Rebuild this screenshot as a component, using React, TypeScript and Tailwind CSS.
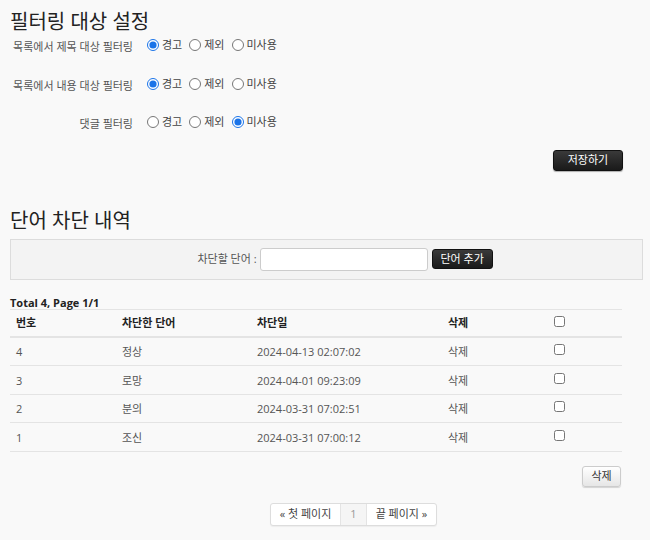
export default function App() {
  const rows = [
    { no: 4, word: "정상", date: "2024-04-13 02:07:02" },
    { no: 3, word: "로망", date: "2024-04-01 09:23:09" },
    { no: 2, word: "분의", date: "2024-03-31 07:02:51" },
    { no: 1, word: "조신", date: "2024-03-31 07:00:12" },
  ]

  const settings = [
    { label: "목록에서 제목 대상 필터링", value: "warn" },
    { label: "목록에서 내용 대상 필터링", value: "warn" },
    { label: "댓글 필터링", value: "off" },
  ]

  const font = { fontFamily: '"Open Sans", "Noto Sans CJK KR", sans-serif' }

  return (
    <div className="min-h-[540px] w-[650px] bg-[#f9f9f9] text-[#333]" style={font}>
      <div className="px-[10px] pt-[9px]">
        <h2 className="text-[20px] leading-[26px] text-[#222]">필터링 대상 설정</h2>

        <div className="mt-[3px] flex flex-col">
          {settings.map((s, i) => (
            <div key={i} className="flex h-[38.5px] items-start">
              <div className="w-[123px] whitespace-nowrap pt-[2px] text-right text-[11px] leading-[14px] text-[#555]">{s.label}</div>
              <div className="ml-[14px] flex items-center gap-[4px] text-[11px] leading-[14px] text-[#444]">
                {[
                  ["warn", "경고"],
                  ["exclude", "제외"],
                  ["off", "미사용"],
                ].map(([v, t]) => (
                  <label key={v} className="mr-[3px] flex items-center gap-[3px]">
                    <input
                      type="radio"
                      name={"f" + i}
                      defaultChecked={s.value === v}
                      className="m-0 h-[12px] w-[12px] accent-[#1a73e8]"
                    />
                    <span>{t}</span>
                  </label>
                ))}
              </div>
            </div>
          ))}
        </div>

        <div className="mt-[-4px] flex justify-end pr-[17px]">
          <button className="h-[21px] w-[70px] rounded-[3px] border border-[#111] bg-gradient-to-b from-[#3a3a3a] to-[#1a1a1a] text-[11px] text-white shadow-[0_1px_1px_rgba(0,0,0,0.3)]">
            저장하기
          </button>
        </div>

        <h2 className="mt-[37px] text-[20px] leading-[26px] text-[#222]">단어 차단 내역</h2>

        <div className="mr-[-3px] mt-[5px] flex h-[41px] items-center justify-center border border-[#dcdcdc] bg-[#f3f3f3] pl-[37px]">
          <span className="mr-[3px] text-[11px] text-[#555]">차단할 단어 :</span>
          <input className="h-[23px] w-[168px] rounded-[3px] border border-[#ccc] bg-white" />
          <button className="ml-[4px] h-[20px] w-[61px] rounded-[3px] border border-[#111] bg-gradient-to-b from-[#3a3a3a] to-[#1a1a1a] text-[11px] text-white">
            단어 추가
          </button>
        </div>

        <div className="mt-[16px] w-[612px]">
          <div className="text-[11px] font-bold leading-[14px] text-[#222]">Total 4, Page 1/1</div>
          <table className="mt-[-1px] w-full border-collapse text-[11px]">
            <thead>
              <tr className="h-[28px] border-t border-b-2 border-[#e4e4e4] text-left font-bold text-[#222]">
                <th className="w-[112px] pl-[6px]">번호</th>
                <th className="w-[135px]">차단한 단어</th>
                <th className="w-[191px]">차단일</th>
                <th className="w-[106px]">삭제</th>
                <th className="text-left">
                  <input type="checkbox" className="m-0 h-[11px] w-[11px]" />
                </th>
              </tr>
            </thead>
            <tbody>
              {rows.map((r) => (
                <tr key={r.no} className="h-[28.5px] border-b border-[#e4e4e4] text-[#555]">
                  <td className="pl-[6px] pt-[2px]">{r.no}</td>
                  <td className="pt-[2px]">{r.word}</td>
                  <td className="pt-[2px]">{r.date}</td>
                  <td className="pt-[2px] font-normal">삭제</td>
                  <td>
                    <input type="checkbox" className="m-0 h-[11px] w-[11px]" />
                  </td>
                </tr>
              ))}
            </tbody>
          </table>

          <div className="mt-[14px] flex justify-end pr-[1px]">
            <button className="h-[21px] w-[39px] rounded-[3px] border border-[#ccc] bg-gradient-to-b from-white to-[#e6e6e6] text-[11px] text-[#333] shadow-[0_1px_1px_rgba(0,0,0,0.15)]">
              삭제
            </button>
          </div>
        </div>

        <div className="mt-[16px] flex justify-center pl-[57px]">
          <div className="flex h-[23px] overflow-hidden rounded-[3px] border border-[#ddd] bg-white text-[11px] text-[#444] shadow-[0_1px_1px_rgba(0,0,0,0.05)]">
            <span className="flex items-center px-[9px]">« 첫 페이지</span>
            <span className="flex items-center border-x border-[#e4e4e4] bg-[#f5f5f5] px-[9px] text-[#999]">1</span>
            <span className="flex items-center px-[9px]">끝 페이지 »</span>
          </div>
        </div>
      </div>
    </div>
  )
}
